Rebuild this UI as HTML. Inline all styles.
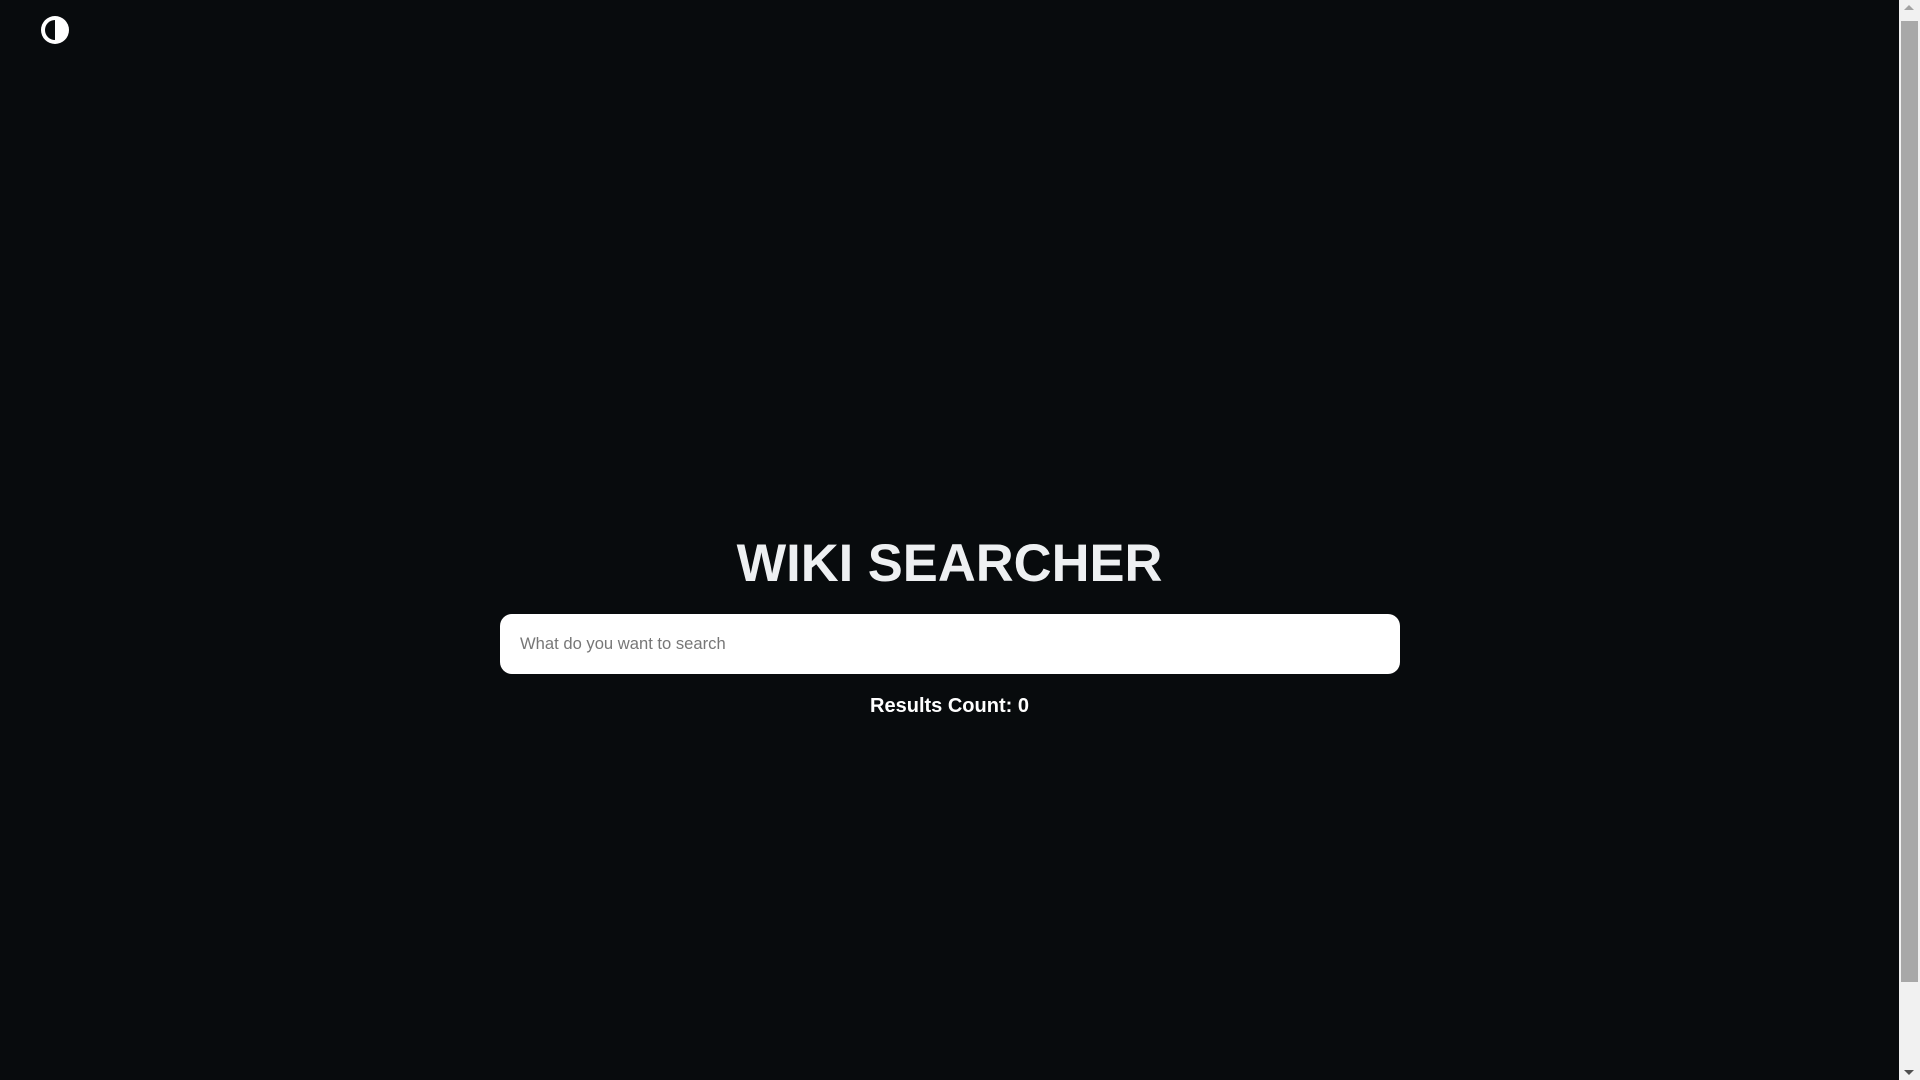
<!DOCTYPE html>
<html><head><meta charset="utf-8"><style>
html,body{margin:0;padding:0;width:1920px;height:1080px;overflow:hidden;background:#080b0d;font-family:"Liberation Sans",Arial,sans-serif;}
.icon{position:absolute;left:41px;top:16px;}
h1{position:absolute;left:0;width:1899px;top:529px;margin:0;text-align:center;color:#eef0f2;font-size:52.5px;font-weight:bold;line-height:70px;}
.inp{position:absolute;left:500px;top:614px;width:900px;height:60px;background:#fff;border-radius:12px;box-sizing:border-box;padding-left:20px;line-height:60px;color:#777;font-size:16.6px;}
.res{position:absolute;left:0;width:1899px;top:694px;text-align:center;color:#fff;font-weight:bold;font-size:20px;line-height:24px;}
.sb{position:absolute;right:0;top:0;width:21px;height:1080px;background:#f1f1f1;}
.th{position:absolute;left:2px;right:2px;top:21px;height:961px;background:#a8a8a8;}
.up{position:absolute;left:5px;top:5px;width:0;height:0;border-left:5px solid transparent;border-right:5px solid transparent;border-bottom:5px solid #a3a3a3;}
.dn{position:absolute;left:5px;bottom:5px;width:0;height:0;border-left:5px solid transparent;border-right:5px solid transparent;border-top:5px solid #505050;}
</style></head><body>
<svg class="icon" width="28" height="28" viewBox="0 0 28 28"><circle cx="14" cy="14" r="14" fill="#fff"/><path d="M14 4 A10 10 0 0 0 14 24 Z" fill="#080b0d"/></svg>
<h1>WIKI SEARCHER</h1>
<div class="inp">What do you want to search</div>
<div class="res">Results Count: 0</div>
<div class="sb"><div class="up"></div><div class="th"></div><div class="dn"></div></div>
</body></html>
